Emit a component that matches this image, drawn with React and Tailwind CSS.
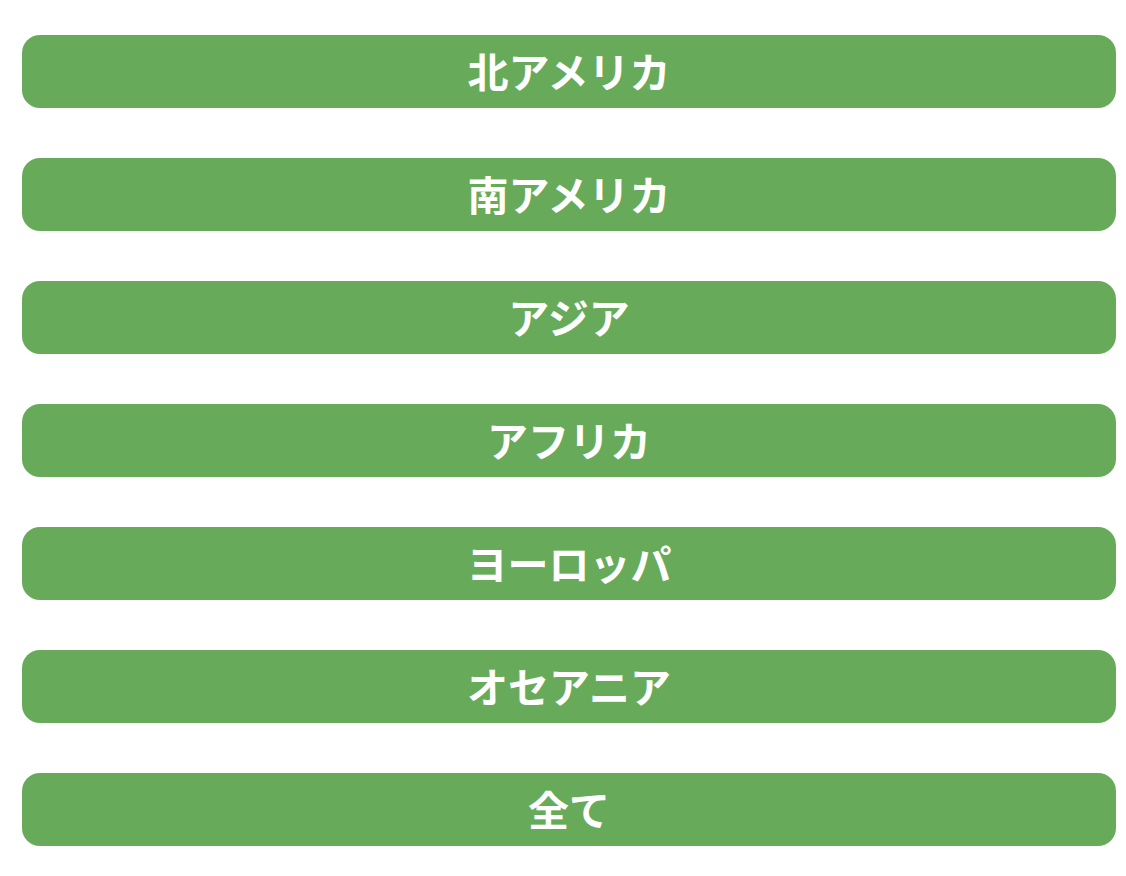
const regions = ['北アメリカ', '南アメリカ', 'アジア', 'アフリカ', 'ヨーロッパ', 'オセアニア', '全て']

export default function App() {
    return (
        <div
            className="min-h-[876px] bg-white pl-[22px] pr-[10px] pt-[35px]"
            style={{ fontFamily: '"Noto Sans CJK JP", "Noto Sans", sans-serif' }}
        >
            <div className="flex flex-col gap-[50px]">
                {regions.map((r) => (
                    <button
                        key={r}
                        className="flex h-[73px] w-full items-center justify-center rounded-[18px] bg-[#67ab5a] pb-[3px] text-[41px] font-bold leading-none text-white"
                    >
                        {r}
                    </button>
                ))}
            </div>
        </div>
    )
}
